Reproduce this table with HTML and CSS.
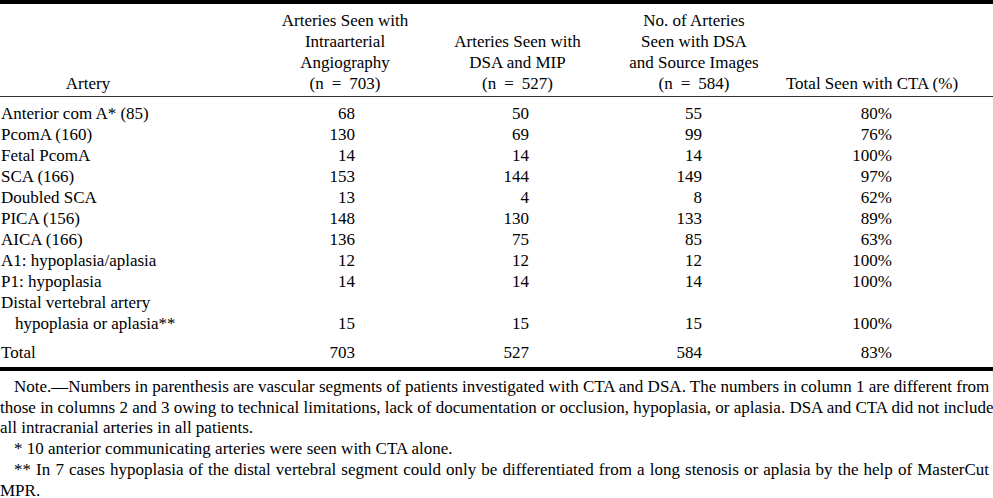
FILE: index.html
```html
<!DOCTYPE html>
<html lang="en">
<head>
<meta charset="utf-8">
<title>Arteries seen with CTA</title>
<link rel="stylesheet" href="styles.css">
</head>
<body>
<table class="data">
  <colgroup>
    <col class="c0"><col class="c1"><col class="c2"><col class="c3"><col class="c4">
  </colgroup>
  <thead>
    <tr>
      <th class="h0">Artery</th>
      <th class="h1">Arteries Seen with<br>Intraarterial<br>Angiography<br>(n<span class="eq">=</span>703)</th>
      <th class="h2">Arteries Seen with<br>DSA and MIP<br>(n<span class="eq">=</span>527)</th>
      <th class="h3">No. of Arteries<br>Seen with DSA<br>and Source Images<br>(n<span class="eq">=</span>584)</th>
      <th class="h4">Total Seen with CTA (%)</th>
    </tr>
  </thead>
  <tbody>
    <tr class="first"><td class="name">Anterior com A* (85)</td><td class="n1">68</td><td class="n2">50</td><td class="n3">55</td><td class="n4">80%</td></tr>
    <tr><td class="name">PcomA (160)</td><td class="n1">130</td><td class="n2">69</td><td class="n3">99</td><td class="n4">76%</td></tr>
    <tr><td class="name">Fetal PcomA</td><td class="n1">14</td><td class="n2">14</td><td class="n3">14</td><td class="n4">100%</td></tr>
    <tr><td class="name">SCA (166)</td><td class="n1">153</td><td class="n2">144</td><td class="n3">149</td><td class="n4">97%</td></tr>
    <tr><td class="name">Doubled SCA</td><td class="n1">13</td><td class="n2">4</td><td class="n3">8</td><td class="n4">62%</td></tr>
    <tr><td class="name">PICA (156)</td><td class="n1">148</td><td class="n2">130</td><td class="n3">133</td><td class="n4">89%</td></tr>
    <tr><td class="name">AICA (166)</td><td class="n1">136</td><td class="n2">75</td><td class="n3">85</td><td class="n4">63%</td></tr>
    <tr><td class="name">A1: hypoplasia/aplasia</td><td class="n1">12</td><td class="n2">12</td><td class="n3">12</td><td class="n4">100%</td></tr>
    <tr><td class="name">P1: hypoplasia</td><td class="n1">14</td><td class="n2">14</td><td class="n3">14</td><td class="n4">100%</td></tr>
    <tr><td class="name">Distal vertebral artery<span class="cont">hypoplasia or aplasia**</span></td><td class="n1">15</td><td class="n2">15</td><td class="n3">15</td><td class="n4">100%</td></tr>
    <tr class="total"><td class="name">Total</td><td class="n1">703</td><td class="n2">527</td><td class="n3">584</td><td class="n4">83%</td></tr>
  </tbody>
</table>
<div class="notes">
  <p class="note">
    <span class="line just indent">Note.—Numbers in parenthesis are vascular segments of patients investigated with CTA and DSA. The numbers in column 1 are different from</span>
    <span class="line just">those in columns 2 and 3 owing to technical limitations, lack of documentation or occlusion, hypoplasia, or aplasia. DSA and CTA did not include</span>
    <span class="line">all intracranial arteries in all patients.</span>
  </p>
  <p class="note">
    <span class="line indent">* 10 anterior communicating arteries were seen with CTA alone.</span>
  </p>
  <p class="note">
    <span class="line just indent">** In 7 cases hypoplasia of the distal vertebral segment could only be differentiated from a long stenosis or aplasia by the help of MasterCut</span>
    <span class="line">MPR.</span>
  </p>
</div>
</body>
</html>
```

FILE: styles.css
```css
html, body {
  margin: 0;
  padding: 0;
  background: #fff;
}
body {
  font-family: "Liberation Serif", "Times New Roman", serif;
  font-size: 17px;
  line-height: 21px;
  color: #000;
  width: 993px;
  overflow: hidden;
}
.data {
  width: 993px;
  table-layout: fixed;
  border-collapse: separate;
  border-spacing: 0;
  border-top: 4px solid #000;
}
.c0 { width: 260px; }
.c1 { width: 170px; }
.c2 { width: 175px; }
.c3 { width: 178px; }
.c4 { width: 210px; }

.data th {
  font-weight: normal;
  text-align: center;
  vertical-align: bottom;
  padding: 6px 0 2px 0;
  border-bottom: 1px solid #333;
  white-space: nowrap;
}
.data th.h0 { padding-right: 84px; }
.data th.h4 { padding-right: 32px; }
.eq { margin: 0 8px; }

.data td {
  padding: 0;
  vertical-align: bottom;
  white-space: nowrap;
}
.data td.name { text-align: left; padding-left: 1px; }
.cont { display: block; padding-left: 14px; }
.data td.n1 { text-align: right; padding-right: 75px; }
.data td.n2 { text-align: right; padding-right: 76px; }
.data td.n3 { text-align: right; padding-right: 81px; }
.data td.n4 { text-align: right; padding-right: 101px; }

.data tr.first td { padding-top: 6px; }
.data tr.total td {
  padding-top: 8px;
  padding-bottom: 4px;
  border-bottom: 4px solid #000;
}

.notes {
  margin-top: 6px;
  width: 989px;
}
.note {
  margin: 0;
}
.line {
  display: block;
  white-space: nowrap;
  line-height: 20.7px;
}
.line.just {
  text-align: justify;
  text-align-last: justify;
}
.line.indent {
  padding-left: 14px;
}
```
